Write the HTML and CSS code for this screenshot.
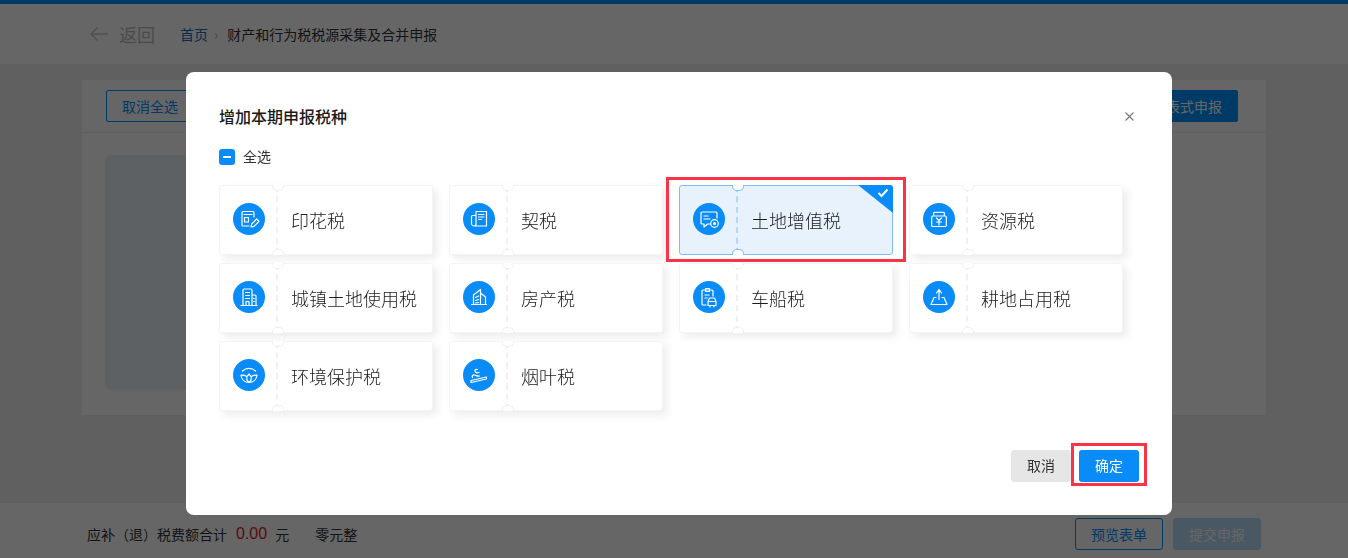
FILE: index.html
```html
<!DOCTYPE html>
<html lang="zh-CN">
<head>
<meta charset="utf-8">
<title>增加本期申报税种</title>
<link rel="stylesheet" href="styles.css">
</head>
<body>
<div class="page">
  <div class="topbar"></div>
  <header class="header">
    <svg class="back-arrow" width="20" height="16" viewBox="0 0 20 16"><path d="M19 8H2M8.500 1.500 2 8l6.500 6.500"/></svg>
    <span class="back-text">返回</span>
    <span class="crumb-link">首页</span>
    <span class="crumb-sep">›</span>
    <span class="crumb-text">财产和行为税税源采集及合并申报</span>
  </header>
  <main class="main">
    <section class="panel">
      <div class="toolbar">
        <button class="btn btn-outline">取消全选</button>
        <button class="btn btn-solid">填表式申报</button>
      </div>
      <div class="panel-body"><div class="notice"></div></div>
    </section>
  </main>
  <footer class="footer">
    <div class="total">
      <span>应补（退）税费额合计</span>
      <span class="amount">0.00</span>
      <span>元</span>
      <span class="words">零元整</span>
    </div>
    <div class="actions">
      <button class="btn btn-outline btn-wide">预览表单</button>
      <button class="btn btn-disabled btn-wide">提交申报</button>
    </div>
  </footer>
</div>

<div class="overlay">
  <div class="modal">
    <div class="modal-head">
      <h2 class="modal-title">增加本期申报税种</h2>
      <svg class="modal-close" width="9" height="9" viewBox="0 0 9 9"><path d="M.5.500l8 8M8.500.500l-8 8"/></svg>
    </div>
    <label class="check-all"><span class="checkbox"></span><span class="check-label">全选</span></label>
    <div class="tax-grid">
      <div class="tax-card">
        <div class="tax-icon-cell"><span class="tax-icon"><svg viewBox="0 0 32 32"><path d="M21 14V9.500a1 1 0 0 0-1-1H10a1 1 0 0 0-1 1V22a1 1 0 0 0 1 1h6M11 11.500h8M11.500 14.500h4v4.500h-4z"/><path d="m18 24 .7-3 5-5 2.300 2.300-5 5z"/></svg></span></div>
        <span class="tax-name">印花税</span>
      </div>
      <div class="tax-card">
        <div class="tax-icon-cell"><span class="tax-icon"><svg viewBox="0 0 32 32"><path d="M13 8.500h10.500V23H11.500M13 8.500V21a2 2 0 0 1-2 2 2.500 2.500 0 0 1-2.500-2v-7.500a1 1 0 0 1 1-1H13M15.500 11.500h5.500M15.500 14h5.500M15.500 16.500h3"/></svg></span></div>
        <span class="tax-name">契税</span>
      </div>
      <div class="tax-card is-selected">
        <div class="tax-icon-cell"><span class="tax-icon"><svg viewBox="0 0 32 32"><path d="M24 15V10a1 1 0 0 0-1-1H9a1 1 0 0 0-1 1v10a1 1 0 0 0 1 1h2v3l3.500-3H17M11 13h4M11 16h6"/><circle cx="21.500" cy="20.500" r="3.800"/><circle class="solid" cx="21.500" cy="20.500" r="1.500"/></svg></span></div>
        <span class="tax-name">土地增值税</span>
        <span class="corner"><svg width="12" height="10" viewBox="0 0 12 10"><path d="M1.500 5 4.500 8 10.500 1.500"/></svg></span>
      </div>
      <div class="tax-card">
        <div class="tax-icon-cell"><span class="tax-icon"><svg viewBox="0 0 32 32"><path d="M10.700 13v-3a.7.7 0 0 1 .7-.7h9.200a.7.7 0 0 1 .7.7v3M9.700 13h12.600a1 1 0 0 1 1 1v8.500a1 1 0 0 1-1 1H9.700a1 1 0 0 1-1-1V14a1 1 0 0 1 1-1zM13.500 15l2.500 2.500 2.500-2.500M16 17.500V22M13.500 19h5"/></svg></span></div>
        <span class="tax-name">资源税</span>
      </div>

      <div class="tax-card">
        <div class="tax-icon-cell"><span class="tax-icon"><svg viewBox="0 0 32 32"><path d="M8 24.500h16M10 24V9a1 1 0 0 1 1-1h7a1 1 0 0 1 1 1v15M19 14h3a1 1 0 0 1 1 1v9M12.500 11.500h4M12.500 14.500h4M12.500 17.500h4M13 24v-3.500h3V24M20.500 17.500h.8M20.500 20.500h.8"/></svg></span></div>
        <span class="tax-name">城镇土地使用税</span>
      </div>
      <div class="tax-card">
        <div class="tax-icon-cell"><span class="tax-icon"><svg viewBox="0 0 32 32"><path d="M8.500 23.500h15M10.500 23.500V14l7-5.500v15M17.500 12l5 4v7.500M12.500 16.500l3-1.500M12.500 19.500l3-1M12.500 22l3-.5"/></svg></span></div>
        <span class="tax-name">房产税</span>
      </div>
      <div class="tax-card">
        <div class="tax-icon-cell"><span class="tax-icon"><svg viewBox="0 0 32 32"><path d="M13 24H10a1 1 0 0 1-1-1V10a1 1 0 0 1 1-1h9a1 1 0 0 1 1 1v5M12.500 7.500h4v3h-4zM12 14h4M12 17h2"/><path d="M15 24.500v-4l1.500-3.500h5l1.500 3.500v4zM15 20.500h8M17 24.500V26M21 24.500V26"/></svg></span></div>
        <span class="tax-name">车船税</span>
      </div>
      <div class="tax-card">
        <div class="tax-icon-cell"><span class="tax-icon"><svg viewBox="0 0 32 32"><path d="M16 8.500v10M13.500 12 16 8.500l2.500 3.500M13 16.500h-2L8 23.500h16l-3-7h-2"/></svg></span></div>
        <span class="tax-name">耕地占用税</span>
      </div>

      <div class="tax-card">
        <div class="tax-icon-cell"><span class="tax-icon"><svg viewBox="0 0 32 32"><path d="M9.500 12a9.500 9.500 0 0 1 13 0M16 23.500c-2.800-2-3.300-5.500 0-8.500 3.300 3 2.800 6.500 0 8.500zM13.200 17.200c-1.500-1-3-1.200-5.200-1 .5 4.200 3.500 7.300 8 7.300s7.500-3.100 8-7.300c-2.200-.2-3.700 0-5.200 1"/></svg></span></div>
        <span class="tax-name">环境保护税</span>
      </div>
      <div class="tax-card">
        <div class="tax-icon-cell"><span class="tax-icon"><svg viewBox="0 0 32 32"><path d="m8 21.500 15.500-3.500v2L8 23.500zM9.500 18.500c-1-1.500.5-3 2-2.500 2 .5 3 1.500 5 1M14.500 10.500c-2-.7-3.500 1-2 2.500 1 1 2.500 1 3.500.5"/></svg></span></div>
        <span class="tax-name">烟叶税</span>
      </div>
    </div>
    <div class="modal-foot">
      <button class="modal-btn modal-cancel">取消</button>
      <button class="modal-btn modal-ok">确定</button>
    </div>
  </div>
  <div class="mark mark-card"></div>
  <div class="mark mark-ok"></div>
</div>
</body>
</html>
```

FILE: styles.css
```css
* { box-sizing: border-box; }
html, body { margin: 0; height: 100%; overflow: hidden; }
body {
  font-family: "Noto Sans CJK SC", "Liberation Sans", sans-serif;
  font-size: 14px;
  color: #333;
  background: #f0f0f0;
}
button { font-family: inherit; cursor: pointer; }

.page { height: 558px; display: flex; flex-direction: column; }
.topbar { height: 4px; background: #0091ff; }
.header {
  height: 60px;
  background: #fff;
  display: flex;
  align-items: center;
  padding-left: 89px;
}
.back-arrow { fill: none; stroke: #ccc; stroke-width: 1.5; }
.back-text { margin-left: 10px; font-size: 18px; color: #bbb; }
.crumb-link { margin-left: 25px; color: #0a6fc2; }
.crumb-sep { margin: 0 9px 0 6px; color: #aaa; }
.crumb-text { color: #333; }

.main { flex: 1; min-height: 0; padding: 16px 82px 88px; }
.panel { height: 100%; background: #fff; }
.toolbar {
  height: 53px;
  padding: 10px 28px 10px 24px;
  display: flex;
  justify-content: space-between;
  border-bottom: 1px solid #eee;
}
.panel-body { padding: 22px 23px 0; }
.notice { width: 800px; height: 235px; border-radius: 6px; background: #eaf2fb; }

.btn {
  height: 32px;
  padding: 0 15px;
  font-size: 14px;
  border-radius: 2px;
  border: 1px solid #0091ff;
}
.btn-outline { background: #fff; color: #0091ff; }
.btn-solid { background: #0091ff; color: #fff; }
.btn-disabled { background: #b8dcf8; border-color: #b8dcf8; color: #fff; }
.btn-wide { width: 88px; padding: 0; border-radius: 3px; }

.footer {
  height: 55px;
  padding: 0 87px;
  background: #fff;
  display: flex;
  justify-content: space-between;
  align-items: center;
}
.total { display: flex; align-items: center; padding-top: 7px; }
.amount { margin: 0 8px 0 9px; font-size: 16px; color: #e02020; font-family: "Liberation Sans", sans-serif; }
.words { margin-left: 26px; }
.actions { display: flex; gap: 10px; padding-top: 7px; }

.overlay { position: fixed; inset: 0; background: rgba(0, 0, 0, .6); }
.modal {
  position: absolute;
  left: 186px;
  top: 72px;
  width: 986px;
  height: 443px;
  padding: 0 33px;
  background: #fff;
  border-radius: 8px;
  display: flex;
  flex-direction: column;
}
.modal-head {
  height: 67px;
  padding-top: 22px;
  display: flex;
  justify-content: space-between;
  align-items: flex-start;
}
.modal-title { margin: -1px 0 0; font-size: 16px; line-height: 46px; height: 46px; font-weight: 500; color: #1a1a1a; }
.modal-close { margin: 18px 5px 0 0; fill: none; stroke: #777; stroke-width: 1.1; }
.check-all { display: flex; align-items: center; gap: 8px; height: 16px; margin-top: 10px; font-size: 14px; color: #333; }
.check-label { margin-top: -2px; }
.checkbox { position: relative; width: 16px; height: 16px; border-radius: 3px; background: #0a8cf8; }
.checkbox::after { content: ""; position: absolute; left: 4px; top: 7px; width: 8px; height: 2px; background: #fff; }

.tax-grid {
  margin-top: 20px;
  display: grid;
  grid-template-columns: repeat(4, 214px);
  grid-auto-rows: 70px;
  gap: 8px 16px;
}
.tax-card {
  position: relative;
  display: flex;
  align-items: center;
  background: #fff;
  border: 1px solid #f4f4f4;
  border-radius: 3px;
  box-shadow: 4px 4px 8px rgba(0, 0, 0, .08);
}
.tax-card::before, .tax-card::after {
  content: "";
  position: absolute;
  left: 52px;
  width: 10px;
  height: 5px;
  background: #fff;
  border: 1px solid #f0f0f0;
}
.tax-card::before { top: -1px; border-top: 0; border-radius: 0 0 5px 5px; }
.tax-card::after { bottom: -1px; border-bottom: 0; border-radius: 5px 5px 0 0; }
.tax-icon-cell {
  width: 58px;
  height: 100%;
  padding-left: 13px;
  display: flex;
  align-items: center;
  border-right: 2px dashed #f0f0f0;
  flex: none;
}
.tax-icon {
  width: 32px;
  height: 32px;
  margin-top: -3px;
  border-radius: 50%;
  background: #0a8cf8;
  display: block;
}
.tax-icon svg { display: block; width: 32px; height: 32px; fill: none; stroke: #fff; stroke-width: 1.2; stroke-linejoin: round; stroke-linecap: round; }
.tax-icon svg .solid { fill: #fff; stroke: none; }
.tax-name { margin-left: 13px; font-size: 18px; font-weight: 300; color: #1c1c1c; white-space: nowrap; }

.tax-card.is-selected { background: #e8f2fc; border-color: #7fbdf9; box-shadow: none; }
.is-selected::before, .is-selected::after { border-color: #7fbdf9; }
.is-selected .tax-icon-cell { border-right-color: #b3d7fa; }
.corner {
  position: absolute;
  right: -1px;
  top: -1px;
  width: 35px;
  height: 28px;
  border-top-right-radius: 3px;
  background: #0a8cf8;
  clip-path: polygon(0 0, 100% 0, 100% 100%);
}
.corner svg { position: absolute; right: 4px; top: 3px; fill: none; stroke: #fff; stroke-width: 2; }

.modal-foot { margin-top: auto; padding-bottom: 33px; display: flex; justify-content: flex-end; gap: 8px; }
.modal-btn { width: 60px; height: 32px; padding: 0 0 2px; border: 0; border-radius: 3px; font-size: 14px; }
.modal-cancel { background: #e6e6e6; color: #333; }
.modal-ok { background: #0a8cf8; color: #fff; }

.mark { position: absolute; border: 3px solid #fb3349; }
.mark-card { left: 666px; top: 177px; width: 240px; height: 85px; }
.mark-ok { left: 1071px; top: 443px; width: 76px; height: 43px; }
```
